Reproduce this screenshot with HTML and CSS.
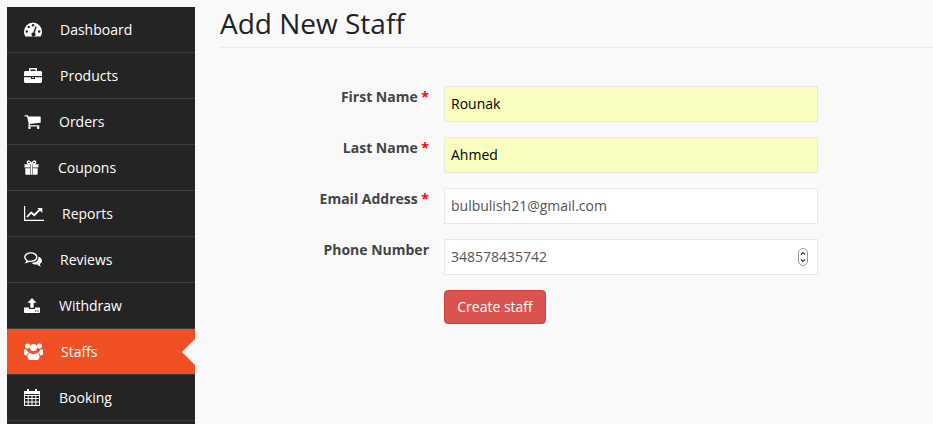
FILE: index.html
```html
<!DOCTYPE html>
<html lang="en">
<head>
    <meta charset="UTF-8">
    <title>Add New Staff</title>
    <link rel="stylesheet" href="styles.css">
</head>
<body>
    <nav class="sidebar">
        <a class="menu-item" href="#">
            <svg class="icon" width="18" height="15" viewBox="0 0 18 15"><path fill="#fff" d="M9 .5a9 9 0 0 0-9 9c0 1.900.5 3.600 1.500 5h15c1-1.400 1.500-3.100 1.500-5a9 9 0 0 0-9-9z"/><g fill="#242424"><circle cx="2.800" cy="9.500" r="1.200"/><circle cx="4.700" cy="5" r="1.200"/><circle cx="9" cy="3.200" r="1.200"/><circle cx="15.200" cy="9.500" r="1.200"/><path d="M11.400 4.200l1.300.5-2 6.200a2 2 0 1 1-1.500-.4z"/></g></svg>
            <span>Dashboard</span>
        </a>
        <a class="menu-item" href="#">
            <svg class="icon" width="18" height="15" viewBox="0 0 18 15"><path fill="#fff" d="M6 0h6c.6 0 1 .4 1 1v2h3.500c.8 0 1.500.7 1.500 1.500V8H0V4.500C0 3.700.7 3 1.500 3H5V1c0-.6.4-1 1-1zm.5 1.500V3h5V1.500zM0 9.200h7V11h4V9.200h7v4.300c0 .8-.7 1.500-1.500 1.500h-15C.7 15 0 14.300 0 13.500zM8 9.200h2v.9H8z"/></svg>
            <span>Products</span>
        </a>
        <a class="menu-item" href="#">
            <svg class="icon" width="17" height="15" viewBox="48 128 1680 1536"><path fill="#fff" d="M704 1536q0 52-38 90t-90 38-90-38-38-90 38-90 90-38 90 38 38 90zm896 0q0 52-38 90t-90 38-90-38-38-90 38-90 90-38 90 38 38 90zm128-1088v512q0 24-16.500 42.500t-40.500 21.500l-1044 122q13 60 13 70 0 16-24 64h920q26 0 45 19t19 45-19 45-45 19h-1024q-26 0-45-19t-19-45q0-11 8-31.500t16-36 21.500-40 15.500-29.500l-177-823h-204q-26 0-45-19t-19-45 19-45 45-19h256q16 0 28.500 6.500t19.500 15.500 13 24.500 8 26 5.500 29.500 4.500 26h1201q26 0 45 19t19 45z"/></svg>
            <span>Orders</span>
        </a>
        <a class="menu-item" href="#">
            <svg class="icon" width="16" height="15" viewBox="0 0 16 15"><path fill="none" stroke="#fff" stroke-width="1.300" d="M7.500 4C6 1 4.600.7 3.800 1.200 3 1.800 3.200 3.600 5 4zM7.500 4C9 1 10.400.7 11.200 1.200c.8.600.6 2.400-1.200 2.800z"/><path fill="#fff" d="M.5 4.200h5.700v3.200H.5zM8.800 4.200h5.700v3.200H8.800zM6.400 4.200h2.200v10.600H6.400zM1.300 8.200h4.900v6.600H2.300a1 1 0 0 1-1-1zM8.800 8.200h4.900v5.600a1 1 0 0 1-1 1H8.800z"/><path fill="#242424" d="M6.100 4.200h.4v10.600h-.4zM8.500 4.200h.4v10.600h-.4z"/></svg>
            <span>Coupons</span>
        </a>
        <a class="menu-item" href="#">
            <svg class="icon" width="20" height="15" viewBox="0 0 20 15"><path fill="#fff" d="M0 0h1.200v13.700H20V15H0z"/><path fill="none" stroke="#fff" stroke-width="1.800" d="M3 11l4.200-4.500 3 2.700L16 3.500"/><path fill="#fff" d="M13.300 2h5v5z"/></svg>
            <span>Reports</span>
        </a>
        <a class="menu-item" href="#">
            <svg class="icon" width="18" height="15" viewBox="0 0 18 15"><path fill="none" stroke="#fff" stroke-width="1.400" d="M6.800.9C3.500.9.800 2.800.8 5.200c0 1.400.9 2.600 2.300 3.400-.1.700-.4 1.300-.8 1.800 1.100-.2 2-.6 2.800-1.200.6.100 1.200.2 1.700.2 3.300 0 6-1.900 6-4.200S10.100.9 6.800.9z"/><path fill="#fff" d="M14.400 4.400c2.100.8 3.600 2.300 3.600 4.100 0 1.400-.9 2.700-2.300 3.400.2.900.6 1.700 1.200 2.500-1.400-.3-2.700-1-3.600-2-.5.100-1 .1-1.500.1-1.800 0-3.400-.6-4.500-1.500 3.800-.1 7.200-2.100 7.200-5.700 0-.5 0-.9-.1-1.400z"/></svg>
            <span>Reviews</span>
        </a>
        <a class="menu-item" href="#">
            <svg class="icon" width="17" height="15" viewBox="0 0 17 15"><path fill="#fff" d="M8 0l4.500 4.800H9.700v5H6.300v-5H3.500zM0 9.500h5v1.500h6V9.500h5V14a1 1 0 0 1-1 1H1a1 1 0 0 1-1-1z"/><g fill="#242424"><circle cx="11.700" cy="13" r=".7"/><circle cx="14" cy="13" r=".7"/></g></svg>
            <span>Withdraw</span>
        </a>
        <a class="menu-item active" href="#">
            <svg class="icon" width="19" height="17" viewBox="0 0 19 17"><g fill="#fff"><circle cx="3.500" cy="3" r="2.500"/><circle cx="15.500" cy="3" r="2.500"/><circle cx="9.500" cy="4.500" r="3.500"/><path d="M0 7c.7-.6 1.600-.6 2.700-.4.300 1.400 1.100 2.500 2.100 3.200-1.100.5-1.900 1.500-2.200 2.700C1 12.300 0 11.700 0 10.700zM19 7c-.7-.6-1.600-.6-2.700-.4-.3 1.400-1.100 2.500-2.100 3.200 1.100.5 1.900 1.500 2.200 2.700 1.600-.2 2.600-.8 2.600-1.800z"/><path d="M5.800 9.800c1 .9 2.300 1.300 3.700 1.300s2.700-.4 3.700-1.300c1.400.3 2.300 2 2.300 4.300 0 1.700-1.100 2.900-2.600 2.900H6.100c-1.500 0-2.600-1.200-2.600-2.900 0-2.300.9-4 2.300-4.300z"/></g></svg>
            <span>Staffs</span>
        </a>
        <a class="menu-item" href="#">
            <svg class="icon" width="17" height="17" viewBox="0 0 17 17"><path fill="none" stroke="#fff" d="M.5 2.500h15v14H.5zM.5 6.500h15M.5 9.500h15M.5 13h15M4.200 6v10.500M8 6v10.500M11.800 6v10.500"/><path fill="#fff" d="M0 2.500h16v2.500H0zM3 0h2v3.500H3zM11 0h2v3.500h-2z"/></svg>
            <span>Booking</span>
        </a>
    </nav>

    <main class="content">
        <h1 class="page-title">Add New Staff</h1>

        <form class="staff-form">
            <div class="form-row">
                <label class="form-label">First Name <span class="required">*</span></label>
                <input class="form-input filled" type="text" value="Rounak">
            </div>
            <div class="form-row">
                <label class="form-label">Last Name <span class="required">*</span></label>
                <input class="form-input filled" type="text" value="Ahmed">
            </div>
            <div class="form-row">
                <label class="form-label">Email Address <span class="required">*</span></label>
                <input class="form-input" type="text" value="bulbulish21@gmail.com">
            </div>
            <div class="form-row">
                <label class="form-label">Phone Number</label>
                <div class="number-field">
                    <input class="form-input" type="text" value="348578435742">
                    <svg class="spinner" width="10" height="18" viewBox="0 0 10 18"><rect x=".5" y=".5" width="9" height="17" rx="4.500" fill="#fff" stroke="#9a9a9a"/><path fill="none" stroke="#333" stroke-width="1.200" d="M3 6.500l2-2 2 2M3 11.500l2 2 2-2"/></svg>
                </div>
            </div>
            <div class="form-row">
                <span class="form-label"></span>
                <button class="btn-create" type="button">Create staff</button>
            </div>
        </form>
    </main>
</body>
</html>
```

FILE: styles.css
```css
* {
    box-sizing: border-box;
}

body {
    margin: 0;
    height: 100vh;
    display: flex;
    overflow: hidden;
    font-family: "Open Sans", sans-serif;
    font-size: 14px;
    color: #444;
    background: #f9f9f9;
}

/* Menu lateral */
.sidebar {
    width: 188px;
    margin: 7px 0 0 7px;
    flex-shrink: 0;
    background: #242424;
}

.menu-item {
    position: relative;
    display: flex;
    align-items: center;
    height: 46px;
    padding-left: 17px;
    border-bottom: 1px solid #3e3e3e;
    color: #fff;
    text-decoration: none;
}

.menu-item.active {
    background: #f15025;
}

/* Flecha del item activo */
.menu-item.active::after {
    content: "";
    position: absolute;
    right: 0;
    top: 10px;
    border-top: 13px solid transparent;
    border-bottom: 13px solid transparent;
    border-right: 13px solid #f9f9f9;
}

.icon {
    flex-shrink: 0;
    margin-right: 18px;
}

/* Contenido */
.content {
    flex: 1;
    padding-left: 25px;
}

.page-title {
    margin: 0 0 38px;
    height: 48px;
    border-bottom: 1px solid #eaeaea;
    font-size: 28px;
    font-weight: 400;
    line-height: 47px;
    color: #222;
}

.form-row {
    display: flex;
    gap: 15px;
    margin-bottom: 15px;
}

.form-label {
    width: 209px;
    padding-top: 2px;
    font-weight: 700;
    text-align: right;
    line-height: 18px;
}

.required {
    color: #f00;
}

.form-input {
    display: block;
    width: 374px;
    height: 36px;
    padding: 0 6px 2px;
    border: 1px solid #e8e8e8;
    background: #fff;
    font-family: inherit;
    font-size: 14px;
    color: #555;
}

.form-input.filled {
    background: #fafdc0;
    color: #000;
}

.number-field {
    position: relative;
}

.spinner {
    position: absolute;
    right: 10px;
    top: 9px;
}

.btn-create {
    height: 34px;
    width: 102px;
    padding: 0 0 2px;
    border: 1px solid #d43f3a;
    border-radius: 4px;
    background: #d9534f;
    font-family: inherit;
    font-size: 14px;
    color: #fff;
}
```
